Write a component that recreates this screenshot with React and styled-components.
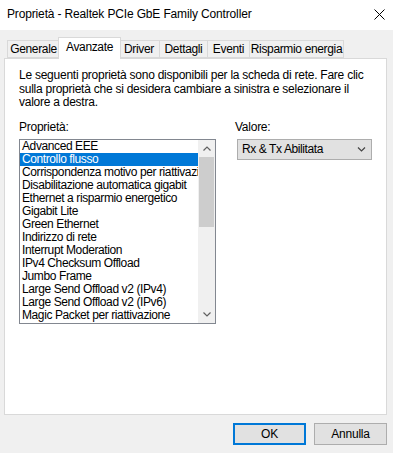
import React from "react";
import styled, { createGlobalStyle } from "styled-components";

const Global = createGlobalStyle`
  html, body { margin: 0; padding: 0; background: #f0f0f0; }
  body { font-family: "Liberation Sans", Arial, sans-serif; font-size: 12px; letter-spacing: -0.25px; color: #000; }
  * { box-sizing: border-box; }
`;

const Window = styled.div`
  width: 393px;
  height: 453px;
  display: flex;
  flex-direction: column;
  background: #f0f0f0;
  overflow: hidden;
`;

const TitleBar = styled.div`
  height: 30px;
  flex: none;
  background: #fff;
  display: flex;
  align-items: center;
  justify-content: space-between;
  padding: 0 8px 2px 7px;
`;

const Title = styled.div`
  font-size: 12px;
  letter-spacing: -0.15px;
`;

const Close = styled.div`
  width: 12px;
  height: 12px;
  display: flex;
  align-items: center;
  justify-content: center;
`;

const Body = styled.div`
  flex: 1;
  display: flex;
  flex-direction: column;
  padding: 8px 6px 0 4px;
`;

const TabStrip = styled.div`
  display: flex;
  align-items: flex-end;
  height: 20px;
  padding-left: 3px;
  position: relative;
  z-index: 1;
`;

const Tab = styled.div`
  width: ${(p) => p.$w}px;
  height: ${(p) => (p.$active ? 22 : 18)}px;
  margin: 0 ${(p) => (p.$active ? -2 : 0)}px ${(p) => (p.$active ? -1 : 0)}px;
  background: ${(p) => (p.$active ? "#fff" : "#f0f0f0")};
  border: 1px solid #d9d9d9;
  border-bottom: ${(p) => (p.$active ? "none" : "1px solid #d9d9d9")};
  border-left: ${(p) => (p.$first || p.$active ? "1px solid #d9d9d9" : "none")};
  display: flex;
  align-items: center;
  justify-content: center;
  padding-bottom: ${(p) => (p.$active ? 3 : 1)}px;
  font-size: 12px;
  letter-spacing: -0.35px;
  white-space: nowrap;
  position: relative;
  z-index: ${(p) => (p.$active ? 2 : 1)};
`;

const Panel = styled.div`
  height: 357px;
  background: #fff;
  border: 1px solid #d9d9d9;
  padding: 10px 14px 0 14px;
  display: flex;
  flex-direction: column;
`;

const Description = styled.p`
  margin: 0;
  line-height: 13.5px;
  white-space: nowrap;
`;

const Columns = styled.div`
  display: flex;
  margin-top: 11px;
`;

const Column = styled.div`
  display: flex;
  flex-direction: column;
  width: ${(p) => p.$w}px;
  margin-left: ${(p) => p.$ml || 0}px;
`;

const Label = styled.div`
  line-height: 13px;
  height: 13px;
  margin-bottom: 5px;
`;

const ListBox = styled.div`
  width: 197px;
  height: 185px;
  border: 1px solid #828790;
  display: flex;
  background: #fff;
`;

const Items = styled.div`
  flex: 1;
  overflow: hidden;
`;

const Item = styled.div`
  height: 13px;
  line-height: 13px;
  padding-left: 2px;
  white-space: nowrap;
  overflow: hidden;
  letter-spacing: -0.4px;
  background: ${(p) => (p.$selected ? "#0078d7" : "transparent")};
  color: ${(p) => (p.$selected ? "#fff" : "#000")};
`;

const ScrollBar = styled.div`
  width: 17px;
  background: #f0f0f0;
  display: flex;
  flex-direction: column;
`;

const Arrow = styled.div`
  height: 17px;
  display: flex;
  align-items: center;
  justify-content: center;
`;

const Track = styled.div`
  flex: 1;
  padding: 0 1px;
`;

const Thumb = styled.div`
  height: 70px;
  background: #cdcdcd;
`;

const Combo = styled.div`
  height: 21px;
  border: 1px solid #adadad;
  background: #e1e1e1;
  display: flex;
  align-items: center;
  justify-content: space-between;
  padding: 0 5px 0 4px;
  margin-left: 2px;
  letter-spacing: -0.4px;
`;

const Footer = styled.div`
  height: 38px;
  flex: none;
  display: flex;
  justify-content: flex-end;
  align-items: flex-start;
  gap: 8px;
  padding: 8px 6px 0 0;
`;

const Button = styled.div`
  width: 73px;
  height: 22px;
  background: #e1e1e1;
  border: ${(p) => (p.$default ? "2px solid #0078d7" : "1px solid #adadad")};
  display: flex;
  align-items: center;
  justify-content: center;
`;

const Chevron = ({ up, color = "#606060", w = 8, h = 5 }) => (
  <svg width={w} height={h} viewBox="0 0 8 5">
    <path
      d={up ? "M0.5 4.5 L4 1 L7.5 4.5" : "M0.5 0.5 L4 4 L7.5 0.5"}
      fill="none"
      stroke={color}
      strokeWidth="1.2"
    />
  </svg>
);

const tabs = [
  { label: "Generale", w: 53 },
  { label: "Avanzate", w: 63, active: true },
  { label: "Driver", w: 41 },
  { label: "Dettagli", w: 48 },
  { label: "Eventi", w: 42 },
  { label: "Risparmio energia", w: 94 },
];

const items = [
  "Advanced EEE",
  "Controllo flusso",
  "Corrispondenza motivo per riattivazione",
  "Disabilitazione automatica gigabit",
  "Ethernet a risparmio energetico",
  "Gigabit Lite",
  "Green Ethernet",
  "Indirizzo di rete",
  "Interrupt Moderation",
  "IPv4 Checksum Offload",
  "Jumbo Frame",
  "Large Send Offload v2 (IPv4)",
  "Large Send Offload v2 (IPv6)",
  "Magic Packet per riattivazione",
];

export default function App() {
  return (
    <Window>
      <Global />
      <TitleBar>
        <Title>Proprietà - Realtek PCIe GbE Family Controller</Title>
        <Close>
          <svg width="11" height="11" viewBox="0 0 11 11">
            <path d="M0.5 0.5 L10.5 10.5 M10.5 0.5 L0.5 10.5" stroke="#000" strokeWidth="1" />
          </svg>
        </Close>
      </TitleBar>
      <Body>
        <TabStrip>
          {tabs.map((t, i) => (
            <Tab key={t.label} $w={t.w} $active={t.active} $first={i === 0}>
              {t.label}
            </Tab>
          ))}
        </TabStrip>
        <Panel>
          <Description>
            Le seguenti proprietà sono disponibili per la scheda di rete. Fare clic
            <br />
            sulla proprietà che si desidera cambiare a sinistra e selezionare il
            <br />
            valore a destra.
          </Description>
          <Columns>
            <Column $w={197}>
              <Label>Proprietà:</Label>
              <ListBox>
                <Items>
                  {items.map((it, i) => (
                    <Item key={it} $selected={i === 1}>
                      {it}
                    </Item>
                  ))}
                </Items>
                <ScrollBar>
                  <Arrow>
                    <Chevron up />
                  </Arrow>
                  <Track>
                    <Thumb />
                  </Track>
                  <Arrow>
                    <Chevron />
                  </Arrow>
                </ScrollBar>
              </ListBox>
            </Column>
            <Column $w={139} $ml={19}>
              <Label>Valore:</Label>
              <Combo>
                <span>Rx &amp; Tx Abilitata</span>
                <Chevron color="#444" w={9} h={5} />
              </Combo>
            </Column>
          </Columns>
        </Panel>
      </Body>
      <Footer>
        <Button $default>OK</Button>
        <Button>Annulla</Button>
      </Footer>
    </Window>
  );
}
